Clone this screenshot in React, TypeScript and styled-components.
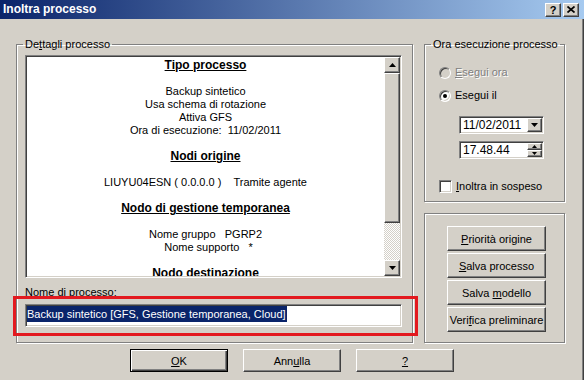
import styled, { createGlobalStyle, css } from 'styled-components';

const GlobalStyle = createGlobalStyle`
  html, body {
    margin: 0;
    padding: 0;
    background: #d4d0c8;
  }
  body {
    font-family: "Liberation Sans", Arial, sans-serif;
    font-size: 11px;
    color: #000;
  }
`;

const raised = css`
  border: 1px solid;
  border-color: #fff #404040 #404040 #fff;
  box-shadow: inset -1px -1px 0 #808080;
  background: #d4d0c8;
`;

const sunken = css`
  border: 1px solid;
  border-color: #808080 #fff #fff #808080;
  box-shadow: inset 1px 1px 0 #404040, inset -1px -1px 0 #d4d0c8;
`;

const Win = styled.div`
  width: 584px;
  height: 380px;
  box-sizing: border-box;
  background: #d4d0c8;
  display: flex;
  flex-direction: column;
  overflow: hidden;
  box-shadow: inset -1px 0 0 #404040, inset -2px 0 0 #808080;
`;

const TitleBar = styled.div`
  flex: none;
  height: 19px;
  display: flex;
  align-items: center;
  padding: 0 5px 0 3px;
  background: linear-gradient(90deg, #0a246a 0%, #a6caf0 100%);
`;

const Title = styled.span`
  flex: 1;
  color: #fff;
  font-weight: bold;
  font-size: 12px;
  line-height: 19px;
`;

const CaptionBtn = styled.div<{ $gap?: boolean }>`
  ${raised};
  width: 16px;
  height: 14px;
  box-sizing: border-box;
  display: flex;
  align-items: center;
  justify-content: center;
  margin-left: ${(p) => (p.$gap ? 2 : 0)}px;
  font-weight: bold;
  font-size: 11px;
  line-height: 12px;
`;

const Main = styled.div`
  display: flex;
  gap: 11px;
  padding: 19px 0 0 16px;
`;

const Group = styled.fieldset<{ $w: number }>`
  margin: 0;
  min-width: 0;
  width: ${(p) => p.$w}px;
  box-sizing: border-box;
  border: 1px solid #808080;
  box-shadow: 1px 1px 0 #fff, inset 1px 1px 0 #fff;
`;

const Legend = styled.legend<{ $shift?: number }>`
  padding: 0 2px;
  margin-left: ${(p) => p.$shift ?? -2}px;
  line-height: 13px;
  font-size: 11px;
  white-space: nowrap;
`;

const DetailsGroup = styled(Group)`
  padding: 4px 10px 15px 8px;
`;

const ListBox = styled.div`
  ${sunken};
  width: 377px;
  height: 223px;
  box-sizing: border-box;
  padding: 1px;
  display: flex;
  background: #fff;
`;

const ListContent = styled.div`
  flex: 1;
  overflow: hidden;
  padding-top: 2px;
  text-align: center;
  line-height: 13px;
`;

const Section = styled.div`
  margin-bottom: 13px;
`;

const Heading = styled.div`
  font-weight: bold;
  font-size: 12px;
  text-decoration: underline;
  margin-bottom: 13px;
`;

const Line = styled.div`
  white-space: pre;
`;

const ScrollBar = styled.div`
  width: 16px;
  flex: none;
  display: flex;
  flex-direction: column;
`;

const ArrowBtn = styled.div<{ $h?: number }>`
  ${raised};
  height: ${(p) => p.$h ?? 16}px;
  box-sizing: border-box;
  display: flex;
  align-items: center;
  justify-content: center;
  flex: none;
`;

const Thumb = styled.div`
  ${raised};
  height: 150px;
  box-sizing: border-box;
  flex: none;
`;

const Track = styled.div`
  flex: 1;
  background-color: #fff;
  background-image: repeating-conic-gradient(#d4d0c8 0 25%, #fff 0 50%);
  background-size: 2px 2px;
`;

const FieldLabel = styled.div`
  margin-top: 8px;
  line-height: 13px;
`;

const NameField = styled.div`
  ${sunken};
  position: relative;
  margin-top: 5px;
  width: 377px;
  height: 23px;
  box-sizing: border-box;
  padding: 1px;
  background: #fff;
`;

const Selected = styled.span`
  display: inline-block;
  background: #0a246a;
  color: #fff;
  line-height: 16px;
  white-space: pre;
  padding-right: 1px;
`;

const Highlight = styled.div`
  position: absolute;
  left: -13px;
  top: -9px;
  right: -17px;
  bottom: -10px;
  border: 3px solid #e3191f;
  pointer-events: none;
`;

const RightCol = styled.div`
  display: flex;
  flex-direction: column;
`;

const TimeGroup = styled(Group)`
  padding: 15px 0 8px 14px;
  display: flex;
  flex-direction: column;
  align-items: flex-start;
`;

const OptionRow = styled.div<{ $mt?: number; $disabled?: boolean }>`
  display: flex;
  align-items: center;
  gap: 4px;
  height: 13px;
  line-height: 13px;
  margin-top: ${(p) => p.$mt ?? 0}px;
  color: ${(p) => (p.$disabled ? '#808080' : '#000')};
  text-shadow: ${(p) => (p.$disabled ? '1px 1px 0 #fff' : 'none')};
`;

const Radio = styled.span<{ $checked?: boolean; $disabled?: boolean }>`
  ${sunken};
  width: 12px;
  height: 12px;
  box-sizing: border-box;
  border-radius: 50%;
  flex: none;
  background: ${(p) => (p.$disabled ? '#d4d0c8' : '#fff')};
  display: flex;
  align-items: center;
  justify-content: center;
  &::after {
    content: '';
    width: 4px;
    height: 4px;
    border-radius: 50%;
    background: #000;
    display: ${(p) => (p.$checked ? 'block' : 'none')};
  }
`;

const CheckBox = styled.span`
  ${sunken};
  width: 13px;
  height: 13px;
  box-sizing: border-box;
  flex: none;
  background: #fff;
`;

const Field = styled.div<{ $mt: number }>`
  ${sunken};
  margin: ${(p) => p.$mt}px 0 0 20px;
  width: 85px;
  height: 18px;
  box-sizing: border-box;
  padding: 1px;
  display: flex;
  background: #fff;
`;

const FieldText = styled.span`
  flex: 1;
  padding-left: 2px;
  line-height: 14px;
  font-size: 12px;
`;

const SpinCol = styled.div`
  width: 15px;
  display: flex;
  flex-direction: column;
`;

const DropBtn = styled(ArrowBtn)`
  width: 15px;
`;

const ActionGroup = styled.div`
  margin-top: 11px;
  flex: 1;
  width: 141px;
  box-sizing: border-box;
  border: 1px solid #808080;
  box-shadow: 1px 1px 0 #fff, inset 1px 1px 0 #fff;
  padding: 12px 0 0 22px;
  display: flex;
  flex-direction: column;
  gap: 2px;
`;

const PushButton = styled.button<{ $w: number; $h: number; $default?: boolean }>`
  width: ${(p) => p.$w}px;
  height: ${(p) => p.$h}px;
  box-sizing: border-box;
  padding: 0;
  font: inherit;
  color: #000;
  background: #d4d0c8;
  border: 1px solid;
  border-color: ${(p) => (p.$default ? '#000' : '#fff #404040 #404040 #fff')};
  box-shadow: ${(p) =>
    p.$default
      ? 'inset 1px 1px 0 #fff, inset -1px -1px 0 #404040, inset -2px -2px 0 #808080'
      : 'inset -1px -1px 0 #808080'};
  white-space: nowrap;
  cursor: default;
`;

const ButtonRow = styled.div`
  display: flex;
  justify-content: center;
  gap: 15px;
  margin-top: 6px;
`;

const Arrow = ({ up, w = 7, h = 4 }: { up?: boolean; w?: number; h?: number }) => (
  <svg width={w} height={h} viewBox={`0 0 ${w} ${h}`}>
    <path d={up ? `M0 ${h}H${w}L${w / 2} 0Z` : `M0 0H${w}L${w / 2} ${h}Z`} fill="#000" />
  </svg>
);

const CloseGlyph = () => (
  <svg width="8" height="7" viewBox="0 0 8 7">
    <path d="M0.5 0.5L7.5 6.5M7.5 0.5L0.5 6.5" stroke="#000" strokeWidth="1.7" />
  </svg>
);

export default function App() {
  return (
    <>
      <GlobalStyle />
      <Win>
        <TitleBar>
          <Title>Inoltra processo</Title>
          <CaptionBtn>?</CaptionBtn>
          <CaptionBtn $gap>
            <CloseGlyph />
          </CaptionBtn>
        </TitleBar>

        <Main>
          <DetailsGroup $w={397}>
            <Legend>
              De<u>t</u>tagli processo
            </Legend>
            <ListBox>
              <ListContent>
                <Section>
                  <Heading>Tipo processo</Heading>
                  <Line>Backup sintetico</Line>
                  <Line>Usa schema di rotazione</Line>
                  <Line>Attiva GFS</Line>
                  <Line>Ora di esecuzione:  11/02/2011</Line>
                </Section>
                <Section>
                  <Heading>Nodi origine</Heading>
                  <Line>LIUYU04ESN ( 0.0.0.0 )    Tramite agente</Line>
                </Section>
                <Section>
                  <Heading>Nodo di gestione temporanea</Heading>
                  <Line>Nome gruppo   PGRP2</Line>
                  <Line>  Nome supporto   *</Line>
                </Section>
                <Section>
                  <Heading>Nodo destinazione</Heading>
                </Section>
              </ListContent>
              <ScrollBar>
                <ArrowBtn>
                  <Arrow up />
                </ArrowBtn>
                <Thumb />
                <Track />
                <ArrowBtn>
                  <Arrow />
                </ArrowBtn>
              </ScrollBar>
            </ListBox>
            <FieldLabel>Nome di processo:</FieldLabel>
            <NameField>
              <Selected>Backup sintetico [GFS, Gestione temporanea, Cloud]</Selected>
              <Highlight />
            </NameField>
          </DetailsGroup>

          <RightCol>
            <TimeGroup $w={141}>
              <Legend $shift={-8}>Ora esecuzione processo</Legend>
              <OptionRow $disabled>
                <Radio $disabled />
                <span>
                  <u>E</u>segui ora
                </span>
              </OptionRow>
              <OptionRow $mt={10}>
                <Radio $checked />
                <span>Esegui il</span>
              </OptionRow>
              <Field $mt={14}>
                <FieldText>11/02/2011</FieldText>
                <DropBtn $h={14}>
                  <Arrow />
                </DropBtn>
              </Field>
              <Field $mt={7}>
                <FieldText>17.48.44</FieldText>
                <SpinCol>
                  <ArrowBtn $h={7}>
                    <Arrow up w={5} h={3} />
                  </ArrowBtn>
                  <ArrowBtn $h={7}>
                    <Arrow w={5} h={3} />
                  </ArrowBtn>
                </SpinCol>
              </Field>
              <OptionRow $mt={21}>
                <CheckBox />
                <span>
                  <u>I</u>noltra in sospeso
                </span>
              </OptionRow>
            </TimeGroup>

            <ActionGroup>
              <PushButton $w={99} $h={25}>
                <u>P</u>riorità origine
              </PushButton>
              <PushButton $w={99} $h={25}>
                <u>S</u>alva processo
              </PushButton>
              <PushButton $w={99} $h={25}>
                Salva <u>m</u>odello
              </PushButton>
              <PushButton $w={99} $h={25}>
                Veri<u>f</u>ica preliminare
              </PushButton>
            </ActionGroup>
          </RightCol>
        </Main>

        <ButtonRow>
          <PushButton $w={98} $h={23} $default>
            <u>O</u>K
          </PushButton>
          <PushButton $w={98} $h={23}>
            Ann<u>u</u>lla
          </PushButton>
          <PushButton $w={98} $h={23}>
            <u>?</u>
          </PushButton>
        </ButtonRow>
      </Win>
    </>
  );
}
